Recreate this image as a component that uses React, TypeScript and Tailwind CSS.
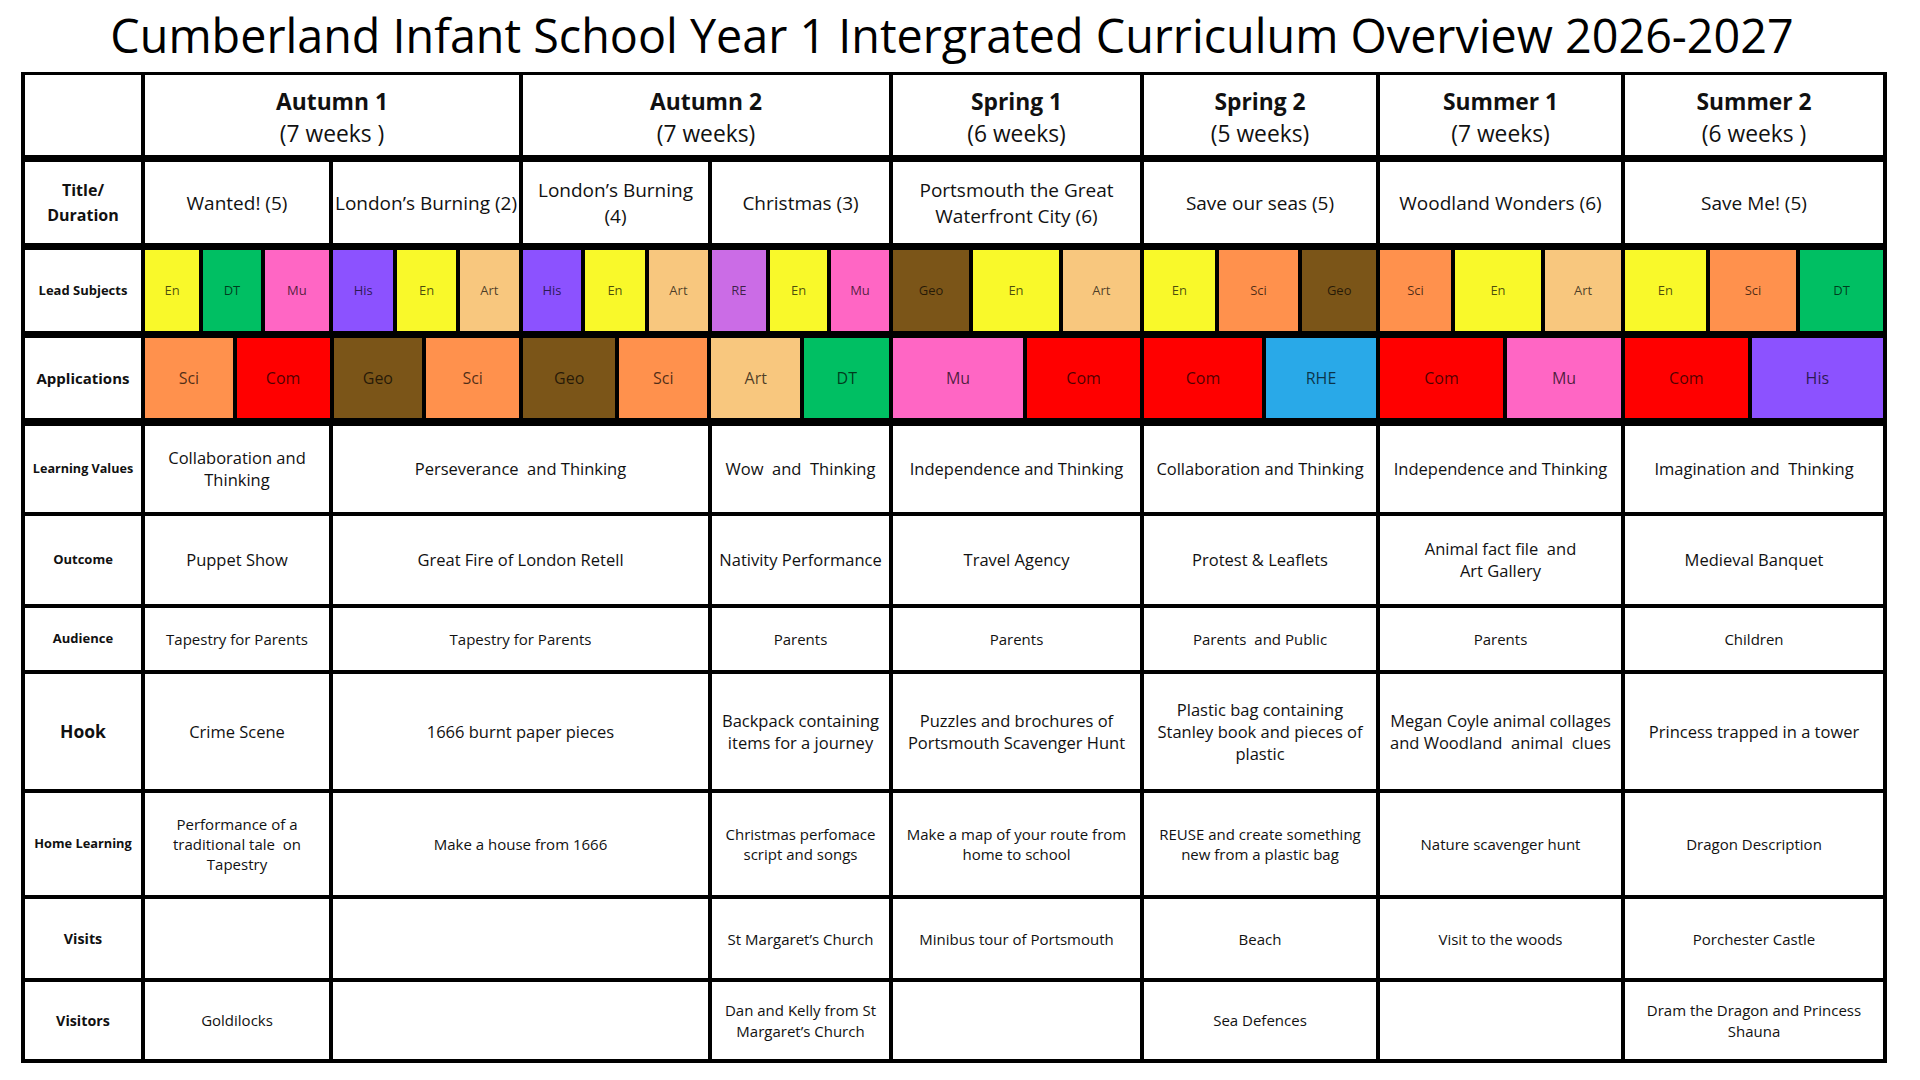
import React from "react";

const COLORS: Record<string, string> = {
  En: "bg-[#f9f92a]",
  DT: "bg-[#00bf63]",
  Mu: "bg-[#ff66c4]",
  His: "bg-[#8c52ff]",
  Art: "bg-[#f8c77e]",
  Sci: "bg-[#ff914d]",
  Com: "bg-[#ff0000]",
  Geo: "bg-[#7b5518]",
  RE: "bg-[#cb6ce6]",
  RHE: "bg-[#29a9e8]",
};

// [subject, width in px]
const LEAD: { span: string; items: [string, number][] }[] = [
  { span: "col-span-2", items: [["En", 54], ["DT", 57], ["Mu", 64], ["His", 60], ["En", 58], ["Art", 59]] },
  { span: "col-span-2", items: [["His", 59], ["En", 61], ["Art", 60], ["RE", 55], ["En", 58], ["Mu", 59]] },
  { span: "col-span-1", items: [["Geo", 75], ["En", 84], ["Art", 76]] },
  { span: "col-span-1", items: [["En", 71], ["Sci", 80], ["Geo", 74]] },
  { span: "col-span-1", items: [["Sci", 71], ["En", 86], ["Art", 76]] },
  { span: "col-span-1", items: [["En", 82], ["Sci", 88], ["DT", 84]] },
];

const APPS: { span: string; items: [string, number][] }[] = [
  { span: "col-span-2", items: [["Sci", 88], ["Com", 93], ["Geo", 89], ["Sci", 93]] },
  { span: "col-span-2", items: [["Geo", 93], ["Sci", 88], ["Art", 90], ["DT", 85]] },
  { span: "col-span-1", items: [["Mu", 128], ["Com", 111]] },
  { span: "col-span-1", items: [["Com", 119], ["RHE", 111]] },
  { span: "col-span-1", items: [["Com", 123], ["Mu", 114]] },
  { span: "col-span-1", items: [["Com", 126], ["His", 135]] },
];

const GRID = "grid grid-cols-[116px_184px_186px_185px_177px_247px_232px_241px_1fr] gap-x-[4px]";

type Row = {
  label: React.ReactNode;
  labelCls: string;
  h: string;
  text: string;
  cells: React.ReactNode[];
};

const LOWER: Row[] = [
  {
    label: "Learning Values",
    labelCls: "text-[12.6px]",
    h: "h-[86px]",
    text: "text-[16.5px] leading-[22px]",
    cells: [
      <>Collaboration and<br />Thinking</>,
      "Perseverance\u00a0 and Thinking",
      "Wow\u00a0 and\u00a0 Thinking",
      "Independence and Thinking",
      "Collaboration and Thinking",
      "Independence and Thinking",
      "Imagination and\u00a0 Thinking",
    ],
  },
  {
    label: "Outcome",
    labelCls: "text-[13px]",
    h: "h-[88px]",
    text: "text-[16.5px] leading-[22px]",
    cells: [
      "Puppet Show",
      "Great Fire of London Retell",
      "Nativity Performance",
      "Travel Agency",
      "Protest & Leaflets",
      <>Animal fact file&nbsp; and<br />Art Gallery</>,
      "Medieval Banquet",
    ],
  },
  {
    label: "Audience",
    labelCls: "text-[13px]",
    h: "h-[62px]",
    text: "text-[15px] leading-[20px]",
    cells: ["Tapestry for Parents", "Tapestry for Parents", "Parents", "Parents", "Parents\u00a0 and Public", "Parents", "Children"],
  },
  {
    label: "Hook",
    labelCls: "text-[17.5px]",
    h: "h-[115px]",
    text: "text-[16.5px] leading-[22px]",
    cells: [
      "Crime Scene",
      "1666 burnt paper pieces",
      <>Backpack containing<br />items for a journey</>,
      <>Puzzles and brochures of<br />Portsmouth Scavenger Hunt</>,
      <>Plastic bag containing<br />Stanley book and pieces of<br />plastic</>,
      <>Megan Coyle animal collages<br />and Woodland&nbsp; animal&nbsp; clues</>,
      "Princess trapped in a tower",
    ],
  },
  {
    label: "Home Learning",
    labelCls: "text-[12.8px]",
    h: "h-[102px]",
    text: "text-[15px] leading-[20px]",
    cells: [
      <>Performance of a<br />traditional tale&nbsp; on<br />Tapestry</>,
      "Make a house from 1666",
      <>Christmas perfomace<br />script and songs</>,
      <>Make a map of your route from<br />home to school</>,
      <>REUSE and create something<br />new from a plastic bag</>,
      "Nature scavenger hunt",
      "Dragon Description",
    ],
  },
  {
    label: "Visits",
    labelCls: "text-[14.3px]",
    h: "h-[79px]",
    text: "text-[15px] leading-[20px]",
    cells: ["", "", "St Margaret\u2019s Church", "Minibus tour of Portsmouth", "Beach", "Visit to the woods", "Porchester Castle"],
  },
  {
    label: "Visitors",
    labelCls: "text-[14.3px]",
    h: "h-[77px]",
    text: "text-[15px] leading-[21px]",
    cells: [
      "Goldilocks",
      "",
      <>Dan and Kelly from St<br />Margaret&rsquo;s Church</>,
      "",
      "Sea Defences",
      "",
      <>Dram the Dragon and Princess<br />Shauna</>,
    ],
  },
];

function Cell({ children, className = "" }: { children?: React.ReactNode; className?: string }) {
  return (
    <div className={`bg-white flex items-center justify-center text-center text-[#111] ${className}`}>
      {children}
    </div>
  );
}

function Blocks({ items, span, text }: { items: [string, number][]; span: string; text: string }) {
  return (
    <div className={`${span} flex gap-x-[4px]`}>
      {items.map(([s, w], i) => (
        <div
          key={i}
          className={`${COLORS[s]} flex items-center justify-center text-black/70 ${text}`}
          style={{ flexGrow: w, flexBasis: 0 }}
        >
          {s}
        </div>
      ))}
    </div>
  );
}

export default function App() {
  return (
    <div className="w-[1920px] h-[1080px] bg-white font-['Open_Sans',sans-serif] text-black">
      <h1 className="h-[72px] flex items-center justify-center text-[46.7px] font-normal leading-none pb-[2px] pr-[16px]">
        Cumberland Infant School Year 1 Intergrated Curriculum Overview 2026-2027
      </h1>

      <div className="ml-[21px] w-[1866px] bg-black p-[4px] pt-[3px] flex flex-col">
        {/* Term header */}
        <div className={`${GRID} h-[80px]`}>
          <Cell />
          {[
            ["Autumn 1", "(7 weeks )", "col-span-2"],
            ["Autumn 2", "(7 weeks)", "col-span-2"],
            ["Spring 1", "(6 weeks)", ""],
            ["Spring 2", "(5 weeks)", ""],
            ["Summer 1", "(7 weeks)", ""],
            ["Summer 2", "(6 weeks )", ""],
          ].map(([t, w, span]) => (
            <Cell key={t} className={`${span} flex-col leading-[32px] pt-[5px]`}>
              <span className="text-[22.8px] font-bold">{t}</span>
              <span className="text-[22.8px]">{w}</span>
            </Cell>
          ))}
        </div>

        {/* Titles */}
        <div className={`${GRID} h-[81px] mt-[7px] text-[19px] leading-[26px]`}>
          <Cell className="font-bold text-[16px] leading-[25px]">Title/<br />Duration</Cell>
          <Cell>Wanted! (5)</Cell>
          <Cell className="whitespace-nowrap">London&rsquo;s Burning (2)</Cell>
          <Cell>London&rsquo;s Burning<br />(4)</Cell>
          <Cell>Christmas (3)</Cell>
          <Cell>Portsmouth the Great<br />Waterfront City (6)</Cell>
          <Cell>Save our seas (5)</Cell>
          <Cell>Woodland Wonders (6)</Cell>
          <Cell>Save Me! (5)</Cell>
        </div>

        {/* Lead subjects */}
        <div className={`${GRID} h-[81px] mt-[7px]`}>
          <Cell className="font-bold text-[13px]">Lead Subjects</Cell>
          {LEAD.map((g, i) => (
            <Blocks key={i} items={g.items} span={g.span} text="text-[13px]" />
          ))}
        </div>

        {/* Applications */}
        <div className={`${GRID} h-[80px] mt-[7px]`}>
          <Cell className="font-bold text-[15px]">Applications</Cell>
          {APPS.map((g, i) => (
            <Blocks key={i} items={g.items} span={g.span} text="text-[16px]" />
          ))}
        </div>

        {/* Lower rows */}
        {LOWER.map((r, ri) => (
          <div key={ri} className={`${GRID} ${r.h} ${ri === 0 ? "mt-[8px]" : "mt-[4px]"} ${r.text}`}>
            <Cell className={`font-bold leading-normal ${r.labelCls}`}>{r.label}</Cell>
            {r.cells.map((c, ci) => (
              <Cell key={ci} className={ci === 1 ? "col-span-2" : ""}>
                {c}
              </Cell>
            ))}
          </div>
        ))}
      </div>
    </div>
  );
}
